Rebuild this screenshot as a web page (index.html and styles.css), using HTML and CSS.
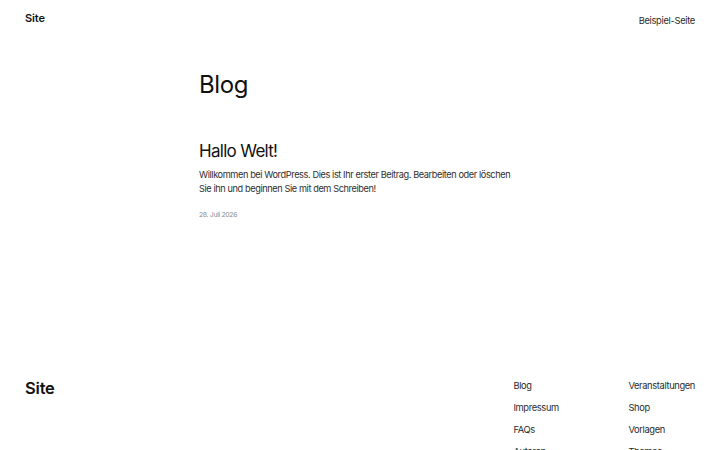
FILE: index.html
```html
<!DOCTYPE html>
<html lang="de">
<head>
<meta charset="utf-8">
<title>Blog – Site</title>
<link rel="stylesheet" href="styles.css">
</head>
<body>
<header class="site-header">
  <a class="site-title" href="#">Site</a>
  <nav class="main-nav"><a href="#">Beispiel-Seite</a></nav>
</header>
<main class="content">
  <h1 class="page-title">Blog</h1>
  <article class="post">
    <h2 class="post-title">Hallo Welt!</h2>
    <p class="post-excerpt">Willkommen bei WordPress. Dies ist Ihr erster Beitrag. Bearbeiten oder löschen Sie ihn und beginnen Sie mit dem Schreiben!</p>
    <div class="post-date">28. Juli 2026</div>
  </article>
</main>
<footer class="site-footer">
  <a class="footer-title" href="#">Site</a>
  <nav class="footer-nav">
    <a href="#">Blog</a>
    <a href="#">Veranstaltungen</a>
    <a href="#">Impressum</a>
    <a href="#">Shop</a>
    <a href="#">FAQs</a>
    <a href="#">Vorlagen</a>
    <a href="#">Autoren</a>
    <a href="#">Themes</a>
  </nav>
</footer>
</body>
</html>
```
FILE: styles.css
```css
* { box-sizing: border-box; }
html, body { margin: 0; padding: 0; background: #fff; }
body {
  font-family: Inter, "Noto Sans", "Liberation Sans", sans-serif;
  color: #111;
  -webkit-font-smoothing: antialiased;
}
a { color: inherit; text-decoration: none; }

.site-header {
  height: 35px;
  padding: 0 25px;
  display: flex;
  align-items: center;
  justify-content: space-between;
}
.site-title {
  font-size: 11px;
  font-weight: 600;
  letter-spacing: -0.1px;
}
.main-nav a {
  font-size: 9.3px;
  color: #2a2a2a;
  letter-spacing: -0.3px;
}

.content {
  width: 322px;
  margin: 0 auto;
  padding-top: 35px;
}
.page-title {
  margin: 0;
  font-size: 24px;
  line-height: 29px;
  font-weight: 400;
  letter-spacing: -0.4px;
}
.post { margin-top: 41px; }
.post-title {
  margin: 0;
  font-size: 17px;
  line-height: 22px;
  font-weight: 400;
  letter-spacing: -0.7px;
}
.post-excerpt {
  margin: 6px 0 0;
  font-size: 9.2px;
  line-height: 14px;
  color: #2e2e2e;
  letter-spacing: -0.4px;
}
.post-date {
  margin-top: 14px;
  font-size: 6.8px;
  line-height: 10px;
  color: #8a8a8a;
  letter-spacing: -0.3px;
}

.site-footer {
  margin-top: 154px;
  padding: 0 25px;
  display: flex;
  justify-content: space-between;
  align-items: flex-start;
}
.footer-title {
  font-size: 16.5px;
  line-height: 22px;
  font-weight: 600;
  margin-top: 3px;
  letter-spacing: -0.2px;
}
.footer-nav {
  display: grid;
  grid-template-columns: 115px auto;
  grid-auto-rows: 22px;
  align-items: center;
}
.footer-nav a {
  font-size: 9.3px;
  color: #2a2a2a;
  letter-spacing: -0.35px;
}
```
